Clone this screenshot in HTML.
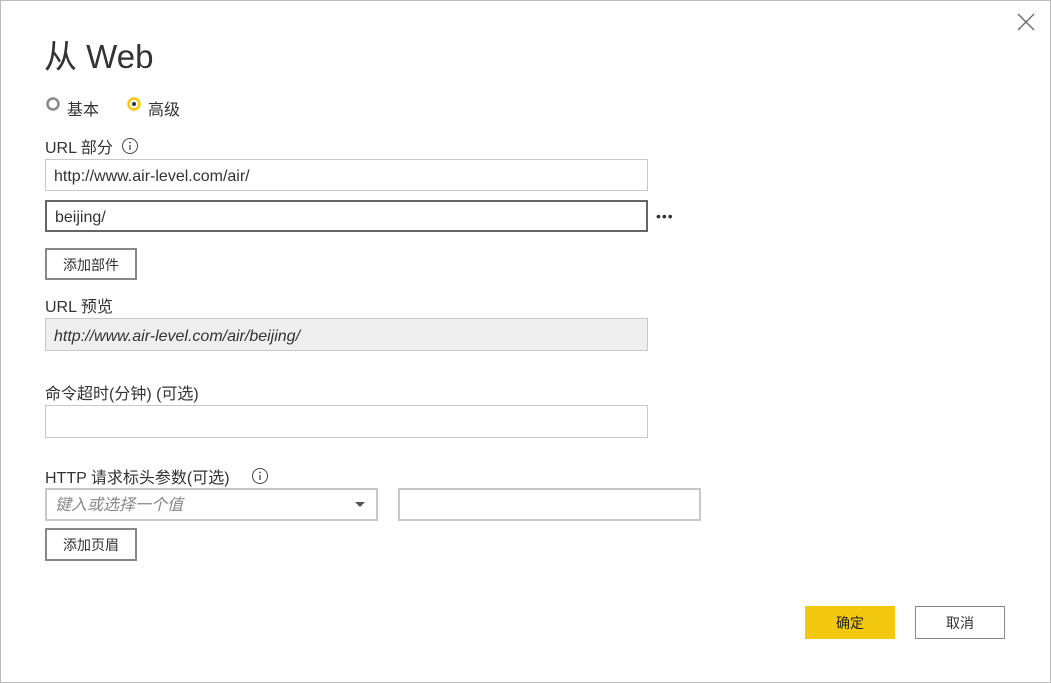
<!DOCTYPE html>
<html><head><meta charset="utf-8"><style>
body{margin:0;width:1051px;height:683px;background:#fff;font-family:"Liberation Sans","Noto Sans CJK SC",sans-serif;color:#333;position:relative;overflow:hidden}
.frame{position:absolute;left:0;top:0;width:1049px;height:681px;border:1px solid #bbb}
.a{position:absolute}
.lbl{font-size:16px;color:#333}
.in{position:absolute;box-sizing:border-box;border:1px solid #c8c8c8;background:#fff;font-size:16px;padding-left:8px;line-height:33px}
.btn{position:absolute;box-sizing:border-box;border:2px solid #888;background:#fff;font-size:14px;text-align:center}
</style></head><body>
<div class="frame"></div>
<svg class="a" style="left:1016px;top:12px" width="20" height="20"><path d="M2 2L18 18M18 2L2 18" stroke="#666" stroke-width="1.3"/></svg>
<div class="a" style="left:44px;top:30px;font-size:33px;color:#333">从 Web</div>
<svg class="a" style="left:45px;top:96px" width="16" height="16"><circle cx="8" cy="8" r="5.5" fill="none" stroke="#888" stroke-width="2.5"/></svg>
<div class="a lbl" style="left:67px;top:96px">基本</div>
<svg class="a" style="left:126px;top:96px" width="16" height="16"><circle cx="8" cy="8" r="5.5" fill="none" stroke="#f2c811" stroke-width="2.5"/><circle cx="8" cy="8" r="2" fill="#333"/></svg>
<div class="a lbl" style="left:148px;top:96px">高级</div>
<div class="a lbl" style="left:45px;top:134px">URL 部分</div>
<svg class="a" style="left:121px;top:137px" width="18" height="18"><circle cx="9" cy="9" r="7.5" fill="none" stroke="#444"/><path d="M9 8v5" stroke="#444" stroke-width="1.3"/><circle cx="9" cy="5.5" r="0.9" fill="#444"/></svg>
<div class="in" style="left:45px;top:159px;width:603px;height:32px">http://www.air-level.com/air/</div>
<div class="in" style="left:45px;top:200px;width:603px;height:32px;border:2px solid #666;padding-left:8px;line-height:31px">beijing/</div>
<div class="a" style="left:656px;top:208px;font-size:14px;color:#333;letter-spacing:1px">•••</div>
<div class="btn" style="left:45px;top:248px;width:92px;height:32px;line-height:30px">添加部件</div>
<div class="a lbl" style="left:45px;top:293px">URL 预览</div>
<div class="in" style="left:45px;top:318px;width:603px;height:33px;background:#efefef;font-style:italic;line-height:35px">http://www.air-level.com/air/beijing/</div>
<div class="a lbl" style="left:45px;top:380px">命令超时(分钟) (可选)</div>
<div class="in" style="left:45px;top:405px;width:603px;height:33px"></div>
<div class="a lbl" style="left:45px;top:464px">HTTP 请求标头参数(可选)</div>
<svg class="a" style="left:251px;top:467px" width="18" height="18"><circle cx="9" cy="9" r="7.5" fill="none" stroke="#444"/><path d="M9 8v5" stroke="#444" stroke-width="1.3"/><circle cx="9" cy="5.5" r="0.9" fill="#444"/></svg>
<div class="in" style="left:45px;top:488px;width:333px;height:33px;border:2px solid #c8c8c8;color:#888;font-style:italic;line-height:32px">键入或选择一个值</div>
<svg class="a" style="left:354px;top:501px" width="12" height="8"><path d="M1 1h10L6 6z" fill="#555"/></svg>
<div class="in" style="left:398px;top:488px;width:303px;height:33px;border:2px solid #c8c8c8"></div>
<div class="btn" style="left:45px;top:528px;width:92px;height:33px;line-height:31px">添加页眉</div>
<div class="a" style="left:805px;top:606px;width:90px;height:33px;background:#f2c811;font-size:14px;text-align:center;line-height:35px;color:#222">确定</div>
<div class="btn" style="left:915px;top:606px;width:90px;height:33px;border-width:1px;border-color:#888;line-height:33px">取消</div>
</body></html>
